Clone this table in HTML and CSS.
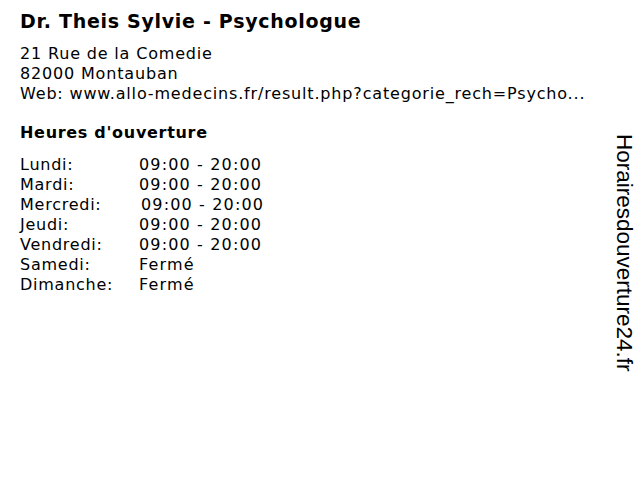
FILE: index.html
```html
<!DOCTYPE html>
<html>
<head>
<meta charset="utf-8">
<link rel="stylesheet" href="styles.css">
</head>
<body>
<div class="page">
  <div class="main">
    <h1 class="title">Dr. Theis Sylvie - Psychologue</h1>
    <div class="address">
      <div>21 Rue de la Comedie</div>
      <div>82000 Montauban</div>
      <div>Web: www.allo-medecins.fr/result.php?categorie_rech=Psycho...</div>
    </div>
    <h2 class="heading">Heures d'ouverture</h2>
    <div class="hours">
      <div class="row"><span class="day">Lundi:</span><span class="time">09:00 - 20:00</span></div>
      <div class="row"><span class="day">Mardi:</span><span class="time">09:00 - 20:00</span></div>
      <div class="row"><span class="day">Mercredi:</span><span class="time shift">09:00 - 20:00</span></div>
      <div class="row"><span class="day">Jeudi:</span><span class="time">09:00 - 20:00</span></div>
      <div class="row"><span class="day">Vendredi:</span><span class="time">09:00 - 20:00</span></div>
      <div class="row"><span class="day">Samedi:</span><span class="time">Fermé</span></div>
      <div class="row"><span class="day">Dimanche:</span><span class="time">Fermé</span></div>
    </div>
  </div>
  <div class="side"><span class="side-text">Horairesdouverture24.fr</span></div>
</div>
</body>
</html>
```
FILE: styles.css
```css
html, body {
  margin: 0;
  padding: 0;
  background: #fff;
}
.page {
  display: flex;
  width: 640px;
  height: 480px;
  font-family: "DejaVu Sans", Verdana, sans-serif;
  color: #000;
}
.main {
  flex: 1;
  padding: 9px 0 0 20px;
}
.title {
  margin: 0;
  font-size: 19px;
  line-height: 24px;
  font-weight: bold;
  letter-spacing: 0.7px;
}
.address {
  margin-top: 11px;
  font-size: 16px;
  line-height: 20px;
  letter-spacing: 0.83px;
}
.heading {
  margin: 19px 0 0 0;
  font-size: 16px;
  line-height: 20px;
  font-weight: bold;
  letter-spacing: 0.7px;
}
.hours {
  margin-top: 12px;
  font-size: 16px;
  line-height: 20px;
  letter-spacing: 0.75px;
}
.row {
  display: flex;
}
.day {
  width: 119px;
}
.time {
  letter-spacing: 1.15px;
}
.shift {
  margin-left: 2px;
}
.side {
  width: 40px;
  display: flex;
  justify-content: center;
  padding: 134px 0 0 8px;
  box-sizing: border-box;
}
.side-text {
  writing-mode: vertical-rl;
  font-family: "Liberation Sans", Arial, sans-serif;
  font-size: 22.5px;
  line-height: 22px;
  height: max-content;
}
```
